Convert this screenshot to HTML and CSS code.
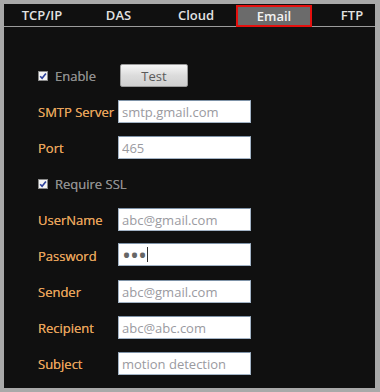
FILE: index.html
```html
<!DOCTYPE html>
<html lang="en">
<head>
    <meta charset="UTF-8">
    <title>Email Settings</title>
    <link rel="stylesheet" href="styles.css">
</head>
<body>
    <div class="panel">
        <div class="tabs">
            <div class="tab">TCP/IP</div>
            <div class="tab">DAS</div>
            <div class="tab">Cloud</div>
            <div class="tab active">Email</div>
            <div class="tab">FTP</div>
        </div>

        <form class="form">
            <div class="row">
                <label class="check short">
                    <svg class="box" width="10" height="10" viewBox="0 0 10 10">
                        <rect x="0.5" y="0.5" width="9" height="9" fill="#f4f4f4" stroke="#8a8a8a"/>
                        <path d="M2.2 5.2 L4.1 7.3 L7.9 2.4" fill="none" stroke="#2b3f9a" stroke-width="1.6"/>
                    </svg>
                    Enable
                </label>
                <button type="button" class="btn">Test</button>
            </div>
            <div class="row">
                <span class="label">SMTP Server</span>
                <input class="field" type="text" value="smtp.gmail.com" readonly>
            </div>
            <div class="row">
                <span class="label">Port</span>
                <input class="field" type="text" value="465" readonly>
            </div>
            <div class="row">
                <label class="check">
                    <svg class="box" width="10" height="10" viewBox="0 0 10 10">
                        <rect x="0.5" y="0.5" width="9" height="9" fill="#f4f4f4" stroke="#8a8a8a"/>
                        <path d="M2.2 5.2 L4.1 7.3 L7.9 2.4" fill="none" stroke="#2b3f9a" stroke-width="1.6"/>
                    </svg>
                    Require SSL
                </label>
            </div>
            <div class="row">
                <span class="label">UserName</span>
                <input class="field" type="text" value="abc@gmail.com" readonly>
            </div>
            <div class="row">
                <span class="label">Password</span>
                <div class="pass">
                    <input class="field secret" type="password" value="abc" readonly>
                    <span class="caret"></span>
                </div>
            </div>
            <div class="row">
                <span class="label">Sender</span>
                <input class="field" type="text" value="abc@gmail.com" readonly>
            </div>
            <div class="row">
                <span class="label">Recipient</span>
                <input class="field" type="text" value="abc@abc.com" readonly>
            </div>
            <div class="row">
                <span class="label">Subject</span>
                <input class="field" type="text" value="motion detection" readonly>
            </div>
        </form>
    </div>
</body>
</html>
```

FILE: styles.css
```css
* {
    box-sizing: border-box;
}

body {
    margin: 0;
    background: #a9a9a9;
    font-family: "Open Sans", "Noto Sans", sans-serif;
}

.panel {
    margin: 4px 5px 4px 4px;
    height: 384px;
    background: #101010;
    overflow: hidden;
}

.tabs {
    display: grid;
    grid-template-columns: 76px 77px 78px 78px 78px;
    height: 23px;
    border-bottom: 1px solid #9c9c9c;
}

.tab {
    color: #e2e2e2;
    font-size: 13px;
    font-weight: 600;
    text-align: center;
    line-height: 22px;
    white-space: nowrap;
}

.tab.active {
    margin: 1px 1px -1px;
    border: 2px solid #e5100e;
    background: #6b6b6b;
    line-height: 18px;
    color: #f2f2f2;
}

.form {
    padding: 37px 0 0 34px;
}

.row {
    display: flex;
    align-items: center;
    height: 23px;
    margin-bottom: 13px;
}

.label {
    width: 80px;
    color: #e6a25a;
    font-size: 13px;
    white-space: nowrap;
    text-shadow: 0 0 0.4px #e6a25a;
}

.check {
    display: flex;
    align-items: center;
    color: #8e8e8e;
    font-size: 13px;
    white-space: nowrap;
    text-shadow: 0 0 0.4px #8e8e8e;
}

.check.short {
    width: 82px;
}

.box {
    flex-shrink: 0;
    margin-right: 7px;
}

.btn {
    width: 68px;
    height: 23px;
    padding: 0;
    border: 1px solid #9a9a9a;
    border-radius: 2px;
    background: linear-gradient(#f6f6f6, #dcdcdc 50%, #cfcfcf);
    color: #5a5a5a;
    font-family: inherit;
    font-size: 13px;
}

.field {
    width: 133px;
    height: 23px;
    padding: 0 3px;
    border: 1px solid #a3b4c6;
    border-top-color: #7f93a8;
    background: #fff;
    color: #9a9a9f;
    font-family: inherit;
    font-size: 13px;
    outline: none;
}

.pass {
    position: relative;
}

.secret {
    color: #666;
    font-size: 24px;
    letter-spacing: -1px;
}

.caret {
    position: absolute;
    left: 29px;
    top: 4px;
    width: 1px;
    height: 15px;
    background: #333;
}
```
